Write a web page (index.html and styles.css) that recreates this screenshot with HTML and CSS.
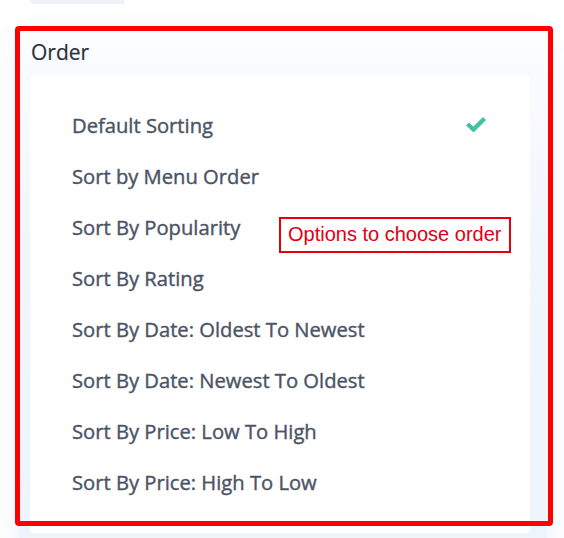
FILE: index.html
```html
<!DOCTYPE html>
<html>
<head>
<meta charset="utf-8">
<link rel="stylesheet" href="styles.css">
</head>
<body>
<div class="tab"></div>
<section class="card">
  <h2 class="title">Order</h2>
  <ul class="list">
    <li class="item selected"><span>Default Sorting</span>
      <svg class="check" width="22" height="16" viewBox="0 0 22 16"><polyline points="2.5,8 8.5,13.5 19.5,2.5" fill="none" stroke="#3fc3a0" stroke-width="4.4"/></svg>
    </li>
    <li class="item"><span>Sort by Menu Order</span></li>
    <li class="item"><span>Sort By Popularity</span></li>
    <li class="item"><span>Sort By Rating</span></li>
    <li class="item"><span>Sort By Date: Oldest To Newest</span></li>
    <li class="item"><span>Sort By Date: Newest To Oldest</span></li>
    <li class="item"><span>Sort By Price: Low To High</span></li>
    <li class="item"><span>Sort By Price: High To Low</span></li>
  </ul>
</section>
<div class="highlight"></div>
<div class="note">Options to choose order</div>
</body>
</html>
```
FILE: styles.css
```css
html, body {
  margin: 0;
  padding: 0;
  background: #ffffff;
}
body {
  position: relative;
  width: 564px;
  height: 538px;
  overflow: hidden;
  font-family: "Open Sans", "Noto Sans", sans-serif;
}
.tab {
  margin-left: 30px;
  width: 95px;
  height: 4px;
  background: #eef1f6;
  border-radius: 0 0 6px 6px;
}
.card {
  margin: 24px 17px 0 20px;
  padding: 10px 17px 0 10px;
  height: 520px;
  box-sizing: border-box;
  background: linear-gradient(#fbfdff, #f1f6fd 40%, #eef4fc);
  box-shadow: 0 6px 28px rgba(140, 175, 225, 0.22);
  border-radius: 4px;
}
.title {
  margin: 0 0 9px 1px;
  font-size: 21px;
  line-height: 29px;
  font-weight: 400;
  -webkit-text-stroke: 0.2px #2b313c;
  color: #2b313c;
}
.list {
  list-style: none;
  margin: 0;
  padding: 23px 43px 26px 42px;
  background: #ffffff;
  border-radius: 4px;
}
.item {
  display: flex;
  justify-content: space-between;
  align-items: center;
  height: 51px;
  font-size: 20.2px;
  font-weight: 400;
  -webkit-text-stroke: 0.4px #4b5466;
  color: #4b5466;
}
.check {
  margin-top: -1px;
}
.highlight {
  position: absolute;
  left: 15px;
  top: 26px;
  width: 538px;
  height: 500px;
  box-sizing: border-box;
  border: 5px solid #ff0000;
  border-radius: 4px;
}
.note {
  position: absolute;
  left: 279px;
  top: 217px;
  width: 232px;
  height: 36px;
  box-sizing: border-box;
  border: 2px solid #e6000c;
  padding-left: 7px;
  font-family: "Liberation Sans", Arial, sans-serif;
  font-size: 20px;
  line-height: 31px;
  color: #e0000f;
  background: #ffffff;
}
```
